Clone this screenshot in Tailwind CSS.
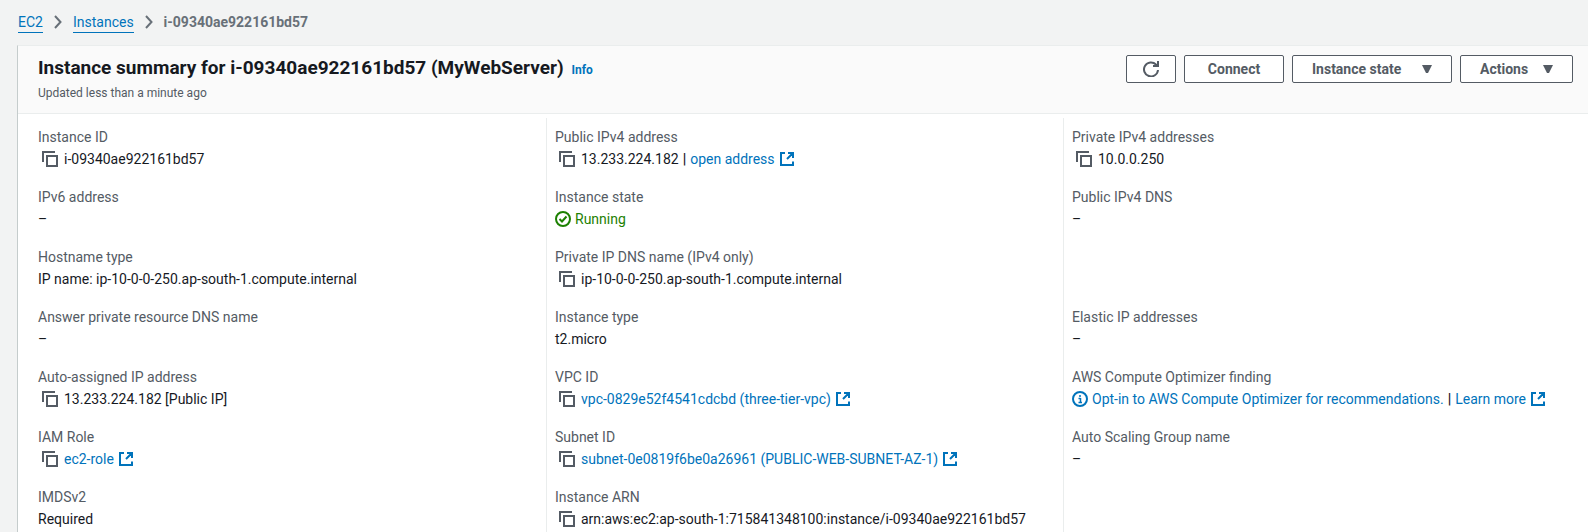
<!DOCTYPE html>
<html lang="en">
<head>
<meta charset="utf-8">
<meta name="viewport" content="width=device-width, initial-scale=1">
<title>Instance summary | EC2</title>
<script src="https://cdn.jsdelivr.net/npm/@tailwindcss/browser@4"></script>
</head>
<body class="min-h-screen overflow-hidden bg-[#f2f3f3] font-['Roboto','Noto_Sans',sans-serif] text-sm leading-[22px] text-[#16191f]">
<svg class="hidden" aria-hidden="true">
  <symbol id="copy" viewBox="0 0 16 16" fill="none" stroke="currentColor" stroke-width="2"><path d="M5 5h10v10H5zM1 11V1h12"/></symbol>
  <symbol id="external" viewBox="0 0 14 14" fill="none" stroke="currentColor" stroke-width="2"><path d="M5 1H1v12h12V9.500M8 1h5v5M12.500 1.500L7 7"/></symbol>
  <symbol id="chevron" viewBox="0 0 8 14" fill="none" stroke="currentColor" stroke-width="2"><path d="M1 1l5.500 6L1 13"/></symbol>
  <symbol id="caret" viewBox="0 0 10 8" fill="currentColor"><path d="M0 0h10L6 8H4z"/></symbol>
</svg>

<nav aria-label="Breadcrumbs" class="px-[18px] pt-[11px]">
  <ol class="flex items-center">
    <li><a href="#" class="block border-b border-[#0073bb] leading-5 text-[#0073bb]">EC2</a></li>
    <li class="mx-[11px] text-[#687078]"><svg class="h-3.5 w-2"><use href="#chevron"/></svg></li>
    <li><a href="#" class="block border-b border-[#0073bb] leading-5 text-[#0073bb]">Instances</a></li>
    <li class="mx-[11px] text-[#687078]"><svg class="h-3.5 w-2"><use href="#chevron"/></svg></li>
    <li class="font-bold text-[#687078]" aria-current="page">i-09340ae922161bd57</li>
  </ol>
</nav>

<main class="mt-3 ml-[17px] border-t border-l border-t-[#eaeded] border-l-[#c5cccc] bg-white">
  <header class="flex items-start justify-between border-b border-[#eaeded] bg-[#fafafa] pt-[9px] pr-[15px] pb-2 pl-5">
    <div>
      <div class="flex items-baseline gap-2 whitespace-nowrap">
        <h1 class="text-[19px] leading-[26px] font-bold">Instance summary for i-09340ae922161bd57 (MyWebServer)</h1>
        <a href="#" class="text-xs font-bold text-[#0073bb]">Info</a>
      </div>
      <p class="text-xs leading-6 text-[#545b64]">Updated less than a minute ago</p>
    </div>
    <div class="flex shrink-0 gap-2 font-bold text-[#545b64]">
      <button type="button" aria-label="Refresh" class="flex h-7 w-[50px] items-center justify-center rounded-xs border border-[#545b64] bg-white">
        <svg class="size-4" viewBox="0 0 16 16" fill="none" stroke="currentColor" stroke-width="2"><path d="M15 9A7 7 0 1 1 13 3.500L15 5M15 0v5H10"/></svg>
      </button>
      <button type="button" class="flex h-7 w-[100px] items-center justify-center rounded-xs border border-[#545b64] bg-white">Connect</button>
      <button type="button" class="flex h-7 w-40 items-center justify-between rounded-xs border border-[#545b64] bg-white px-[19px]">Instance state<svg class="h-2 w-2.5"><use href="#caret"/></svg></button>
      <button type="button" class="flex h-7 w-[113px] items-center justify-between rounded-xs border border-[#545b64] bg-white px-[19px]">Actions<svg class="h-2 w-2.5"><use href="#caret"/></svg></button>
    </div>
  </header>

  <div class="grid grid-cols-3 pt-1 pr-2 pl-[11px] whitespace-nowrap">
    <dl class="flex flex-col gap-4 pt-2 pb-5 pl-[9px]">
      <div><dt class="text-[#545b64]">Instance ID</dt><dd class="flex items-center gap-1.5 pl-1"><button type="button" aria-label="Copy instance ID" class="text-[#545b64]"><svg class="size-4"><use href="#copy"/></svg></button>i-09340ae922161bd57</dd></div>
      <div><dt class="text-[#545b64]">IPv6 address</dt><dd>–</dd></div>
      <div><dt class="text-[#545b64]">Hostname type</dt><dd>IP name: ip-10-0-0-250.ap-south-1.compute.internal</dd></div>
      <div><dt class="text-[#545b64]">Answer private resource DNS name</dt><dd>–</dd></div>
      <div><dt class="text-[#545b64]">Auto-assigned IP address</dt><dd class="flex items-center gap-1.5 pl-1"><button type="button" aria-label="Copy IP address" class="text-[#545b64]"><svg class="size-4"><use href="#copy"/></svg></button>13.233.224.182 [Public IP]</dd></div>
      <div><dt class="text-[#545b64]">IAM Role</dt><dd class="flex items-center gap-1.5 pl-1"><button type="button" aria-label="Copy IAM role" class="text-[#545b64]"><svg class="size-4"><use href="#copy"/></svg></button><a href="#" class="flex items-center gap-[5px] text-[#0073bb]">ec2-role<svg class="size-3.5"><use href="#external"/></svg></a></dd></div>
      <div><dt class="text-[#545b64]">IMDSv2</dt><dd>Required</dd></div>
    </dl>

    <dl class="flex flex-col gap-4 border-l border-[#eaeded] pt-2 pb-5 pl-2">
      <div><dt class="text-[#545b64]">Public IPv4 address</dt><dd class="flex items-center gap-1.5 pl-1"><button type="button" aria-label="Copy public IPv4 address" class="text-[#545b64]"><svg class="size-4"><use href="#copy"/></svg></button><span class="flex gap-1">13.233.224.182 <span class="font-bold">|</span> <a href="#" class="flex items-center gap-[5px] text-[#0073bb]">open address<svg class="size-3.5"><use href="#external"/></svg></a></span></dd></div>
      <div><dt class="text-[#545b64]">Instance state</dt><dd class="flex items-center gap-1 text-[#1d8102]"><svg class="size-4" viewBox="0 0 16 16" fill="none" stroke="currentColor" stroke-width="2"><circle cx="8" cy="8" r="7"/><path d="M4.500 8l2.500 2.500 4.500-5"/></svg>Running</dd></div>
      <div><dt class="text-[#545b64]">Private IP DNS name (IPv4 only)</dt><dd class="flex items-center gap-1.5 pl-1"><button type="button" aria-label="Copy private IP DNS name" class="text-[#545b64]"><svg class="size-4"><use href="#copy"/></svg></button>ip-10-0-0-250.ap-south-1.compute.internal</dd></div>
      <div><dt class="text-[#545b64]">Instance type</dt><dd>t2.micro</dd></div>
      <div><dt class="text-[#545b64]">VPC ID</dt><dd class="flex items-center gap-1.5 pl-1"><button type="button" aria-label="Copy VPC ID" class="text-[#545b64]"><svg class="size-4"><use href="#copy"/></svg></button><a href="#" class="flex items-center gap-[5px] text-[#0073bb]">vpc-0829e52f4541cdcbd (three-tier-vpc)<svg class="size-3.5"><use href="#external"/></svg></a></dd></div>
      <div><dt class="text-[#545b64]">Subnet ID</dt><dd class="flex items-center gap-1.5 pl-1"><button type="button" aria-label="Copy subnet ID" class="text-[#545b64]"><svg class="size-4"><use href="#copy"/></svg></button><a href="#" class="flex items-center gap-[5px] text-[#0073bb]">subnet-0e0819f6be0a26961 (PUBLIC-WEB-SUBNET-AZ-1)<svg class="size-3.5"><use href="#external"/></svg></a></dd></div>
      <div><dt class="text-[#545b64]">Instance ARN</dt><dd class="flex items-center gap-1.5 pl-1"><button type="button" aria-label="Copy instance ARN" class="text-[#545b64]"><svg class="size-4"><use href="#copy"/></svg></button>arn:aws:ec2:ap-south-1:715841348100:instance/i-09340ae922161bd57</dd></div>
    </dl>

    <dl class="grid auto-rows-[44px] gap-4 border-l border-[#eaeded] pt-2 pl-2">
      <div><dt class="text-[#545b64]">Private IPv4 addresses</dt><dd class="flex items-center gap-1.5 pl-1"><button type="button" aria-label="Copy private IPv4 address" class="text-[#545b64]"><svg class="size-4"><use href="#copy"/></svg></button>10.0.0.250</dd></div>
      <div><dt class="text-[#545b64]">Public IPv4 DNS</dt><dd>–</dd></div>
      <div class="row-start-4"><dt class="text-[#545b64]">Elastic IP addresses</dt><dd>–</dd></div>
      <div class="row-start-5"><dt class="text-[#545b64]">AWS Compute Optimizer finding</dt><dd class="flex gap-1"><a href="#" class="flex items-center gap-1 text-[#0073bb]"><svg class="size-4" viewBox="0 0 16 16" fill="none" stroke="currentColor" stroke-width="2"><circle cx="8" cy="8" r="7"/><path d="M8 4v2M8.500 7v5M6.500 7.500h2M6.500 11.500h3.500" stroke-width="1.500"/></svg>Opt-in to AWS Compute Optimizer for recommendations.</a><span class="font-bold">|</span><a href="#" class="flex items-center gap-[5px] text-[#0073bb]">Learn more<svg class="size-3.5"><use href="#external"/></svg></a></dd></div>
      <div class="row-start-6"><dt class="text-[#545b64]">Auto Scaling Group name</dt><dd>–</dd></div>
    </dl>
  </div>
</main>
</body>
</html>
